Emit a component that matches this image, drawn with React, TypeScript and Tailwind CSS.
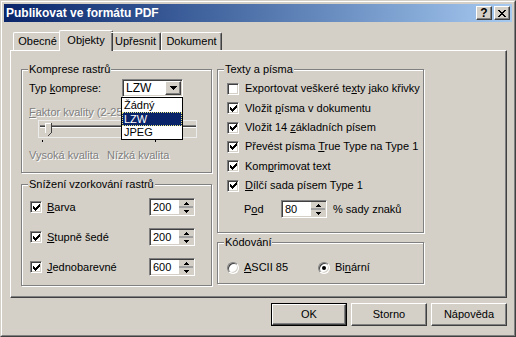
import React from "react";

const raised =
  "border border-t-white border-l-white border-r-[#404040] border-b-[#404040] shadow-[inset_-1px_-1px_#808080]";
const sunken =
  "border border-t-[#808080] border-l-[#808080] border-r-white border-b-white shadow-[inset_1px_1px_#404040,inset_-1px_-1px_#d4d0c8]";

function Mn({ t, i }: { t: string; i: number }) {
  if (i < 0) return <>{t}</>;
  return (
    <>
      {t.slice(0, i)}
      <span className="underline underline-offset-[1px]">{t[i]}</span>
      {t.slice(i + 1)}
    </>
  );
}

function Check({ on }: { on: boolean }) {
  return (
    <span className={`w-[12px] h-[12px] bg-white ${sunken} flex items-center justify-center shrink-0`}>
      {on && (
        <svg width="7" height="7" viewBox="0 0 7 7" shapeRendering="crispEdges">
          <path
            d="M6 0h1v1H6z M5 1h2v1H5z M0 2h1v1H0z M4 2h3v1H4z M0 3h2v1H0z M3 3h3v1H3z M0 4h5v1H0z M1 5h3v1H1z M2 6h1v1H2z"
            fill="#000"
          />
        </svg>
      )}
    </span>
  );
}

function Radio({ on }: { on: boolean }) {
  return (
    <span className="w-[12px] h-[12px] rounded-full bg-white border border-t-[#808080] border-l-[#808080] border-r-white border-b-white shadow-[inset_1px_1px_#404040,inset_-1px_-1px_#d4d0c8] flex items-center justify-center shrink-0">
      {on && <span className="w-[4px] h-[4px] rounded-full bg-black" />}
    </span>
  );
}

function Spin({ v }: { v: string }) {
  return (
    <div className={`flex h-[18px] w-[46px] bg-white ${sunken}`}>
      <span className="flex-1 pl-[3px] leading-[16px]">{v}</span>
      <div className="flex flex-col w-[14px] my-[1px] mr-[1px] bg-[#d4d0c8]">
        <span className="flex-1 flex items-center justify-center border-b-2 border-[#a0a0a0]">
          <svg width="5" height="3" viewBox="0 0 5 3">
            <path d="M2 0h1v1h1v1h1v1H0V2h1V1h1z" fill="#000" />
          </svg>
        </span>
        <span className="flex-1 flex items-center justify-center">
          <svg width="5" height="3" viewBox="0 0 5 3">
            <path d="M0 0h5v1H4v1H3v1H2V2H1V1H0z" fill="#000" />
          </svg>
        </span>
      </div>
    </div>
  );
}

function Group({
  label,
  className,
  children,
}: {
  label: string;
  className: string;
  children: React.ReactNode;
}) {
  return (
    <div
      className={`relative border border-[#808080] shadow-[inset_1px_1px_white,1px_1px_white] ${className}`}
    >
      <span className="absolute -top-[7px] left-[6px] px-[1px] bg-[#d4d0c8] leading-[13px]">
        {label}
      </span>
      {children}
    </div>
  );
}

const fontRows: { t: string; i: number; on: boolean; h: string }[] = [
  { t: "Exportovat veškeré texty jako křivky", i: 21, on: false, h: "h-[19px]" },
  { t: "Vložit písma v dokumentu", i: 7, on: true, h: "h-[20px]" },
  { t: "Vložit 14 základních písem", i: 10, on: true, h: "h-[19px]" },
  { t: "Převést písma True Type na Type 1", i: 14, on: true, h: "h-[19px]" },
  { t: "Komprimovat text", i: 3, on: true, h: "h-[20px]" },
  { t: "Dílčí sada písem Type 1", i: 0, on: true, h: "h-[19px]" },
];

export default function App() {
  return (
    <div className="w-[516px] h-[337px] bg-[#d4d0c8] text-[11px] leading-[13px] text-black font-['Liberation_Sans',Arial,sans-serif] border border-t-[#d4d0c8] border-l-[#d4d0c8] border-r-[#404040] border-b-[#404040] select-none">
      <div className="h-full border border-t-white border-l-white border-r-[#808080] border-b-[#808080] p-[2px] flex flex-col">
        {/* title bar */}
        <div className="h-[18px] flex items-center justify-between bg-linear-to-r from-[#0a246a] to-[#a6caf0] pl-[2px] pr-[2px]">
          <span className="text-white font-bold text-[12px]">Publikovat ve formátu PDF</span>
          <div className="flex gap-[2px]">
            <span className={`w-[16px] h-[14px] bg-[#d4d0c8] ${raised} flex items-center justify-center font-bold text-[12px] leading-none`}>
              ?
            </span>
            <span className={`w-[16px] h-[14px] bg-[#d4d0c8] ${raised} flex items-center justify-center`}>
              <svg width="8" height="7" viewBox="0 0 8 7" shapeRendering="crispEdges">
                <path d="M0 0h2v1h1v1h2V1h1V0h2v1H7v1H6v1H5v1h1v1h1v1h1v1H6V6H5V5H3v1H2v1H0V6h1V5h1V4h1V3H2V2H1V1H0z" fill="#000" />
              </svg>
            </span>
          </div>
        </div>

        {/* tabs */}
        <div className="pl-[6px] pr-[5px] mt-[8px] flex flex-col">
          <div className="h-[20px] flex items-end pl-[3px] relative z-10">
            <div className="h-[18px] w-[48px] flex items-center justify-center border-t border-l border-t-white border-l-white rounded-tl-[2px]">
              Obecné
            </div>
            <div className="h-[21px] w-[54px] -mx-[2px] -mb-px bg-[#d4d0c8] flex items-start pt-[3px] justify-center border-t border-l border-r border-t-white border-l-white border-r-[#404040] shadow-[inset_-1px_0_#808080] rounded-t-[2px]">
              Objekty
            </div>
            <div className="h-[18px] w-[50px] flex items-center justify-center border-t border-r border-t-white border-r-[#404040] shadow-[inset_-1px_0_#808080] rounded-tr-[2px]">
              Upřesnit
            </div>
            <div className="h-[18px] w-[61px] flex items-center justify-center border-t border-l border-r border-t-white border-l-white border-r-[#404040] shadow-[inset_-1px_0_#808080] rounded-t-[2px]">
              Dokument
            </div>
          </div>

          {/* panel */}
          <div className={`h-[248px] ${raised} pl-[10px] pt-[18px] flex gap-[5px]`}>
            {/* left column */}
            <div className="w-[191px] flex flex-col gap-[11px]">
              <Group label="Komprese rastrů" className="h-[104px] pt-[9px] pl-[7px]">
                <div className="flex items-center">
                  <span className="w-[93px]">
                    <Mn t="Typ komprese:" i={4} />
                  </span>
                  <div className={`relative w-[61px] h-[18px] bg-white ${sunken} flex items-center`}>
                    <span className="flex-1 pl-[3px] text-[12px]">LZW</span>
                    <span className={`w-[16px] h-[14px] mr-[1px] bg-[#d4d0c8] ${raised} flex items-center justify-center`}>
                      <svg width="7" height="4" viewBox="0 0 7 4">
                        <path d="M0 0h7v1H6v1H5v1H4v1H3V3H2V2H1V1H0z" fill="#000" />
                      </svg>
                    </span>
                    {/* open list */}
                    <div className="absolute left-[-2px] top-[17px] w-[62px] border border-black bg-white text-[11px] leading-[14px] z-20">
                      <div className="pl-[2px] h-[14px]">Žádný</div>
                      <div className="h-[14px] bg-[#0a246a] text-white pl-[1px] border border-dotted border-[#e8e880] leading-[12px]">
                        LZW
                      </div>
                      <div className="pl-[2px] h-[13px] leading-[13px]">JPEG</div>
                    </div>
                  </div>
                </div>
                <div className="mt-[9px] whitespace-nowrap text-[#808080] [text-shadow:1px_1px_white]">
                  <Mn t="Faktor kvality (2-255):" i={0} />
                </div>
                <svg width="165" height="24" viewBox="0 0 165 24" className="ml-[9px] mt-[1px]" shapeRendering="crispEdges">
                  <rect x="0.5" y="0.5" width="158" height="17" fill="none" stroke="#ececec" />
                  <rect x="2" y="5" width="156" height="1" fill="#808080" />
                  <rect x="2" y="6" width="156" height="1" fill="#404040" />
                  <rect x="2" y="7" width="156" height="1" fill="#ffffff" />
                  <path d="M7 3h6v10l-3 3l-3-3z" fill="#d4d0c8" />
                  <path d="M7 3h6M7 3v10" stroke="#ffffff" fill="none" />
                  <path d="M13 3v10l-3 3" stroke="#404040" fill="none" />
                  <rect x="4" y="20" width="1" height="2" fill="#000" />
                  <rect x="117" y="20" width="1" height="2" fill="#000" />
                </svg>
                <div className="flex mt-[5px] text-[#808080] [text-shadow:1px_1px_white]">
                  <span className="w-[78px]">Vysoká kvalita</span>
                  <span>Nízká kvalita</span>
                </div>
              </Group>

              <Group label="Snížení vzorkování rastrů" className="h-[102px] pt-[13px] pl-[8px] pr-[16px] flex flex-col gap-[12px]">
                {[
                  { t: "Barva", v: "200" },
                  { t: "Stupně šedé", v: "200" },
                  { t: "Jednobarevné", v: "600" },
                ].map((r) => (
                  <div key={r.t} className="flex items-center h-[18px]">
                    <Check on />
                    <span className="ml-[5px] flex-1">
                      <Mn t={r.t} i={0} />
                    </span>
                    <Spin v={r.v} />
                  </div>
                ))}
              </Group>
            </div>

            {/* right column */}
            <div className="w-[207px] flex flex-col gap-[9px]">
              <Group label="Texty a písma" className="h-[164px] pt-[9px] pl-[9px]">
                {fontRows.map((r) => (
                  <div key={r.t} className={`flex items-center ${r.h}`}>
                    <Check on={r.on} />
                    <span className="ml-[6px]">
                      <Mn t={r.t} i={r.i} />
                    </span>
                  </div>
                ))}
                <div className="flex items-center mt-[5px] pl-[17px]">
                  <span className="w-[37px]">
                    <Mn t="Pod" i={1} />
                  </span>
                  <Spin v="80" />
                  <span className="ml-[6px]">% sady znaků</span>
                </div>
              </Group>

              <Group label="Kódování" className="h-[42px] pt-[18px] pl-[9px] flex items-start">
                <div className="flex items-center w-[91px]">
                  <Radio on={false} />
                  <span className="ml-[5px]">
                    <Mn t="ASCII 85" i={0} />
                  </span>
                </div>
                <div className="flex items-center">
                  <Radio on />
                  <span className="ml-[5px]">
                    <Mn t="Binární" i={2} />
                  </span>
                </div>
              </Group>
            </div>
          </div>

          {/* buttons */}
          <div className="flex justify-end gap-[4px] mt-[5px]">
            <button className="w-[76px] h-[23px] border border-black">
              <span className={`flex w-full h-full items-center justify-center ${raised}`}>OK</span>
            </button>
            <button className={`w-[76px] h-[23px] ${raised}`}>Storno</button>
            <button className={`w-[76px] h-[23px] ${raised}`}>Nápověda</button>
          </div>
        </div>
      </div>
    </div>
  );
}
